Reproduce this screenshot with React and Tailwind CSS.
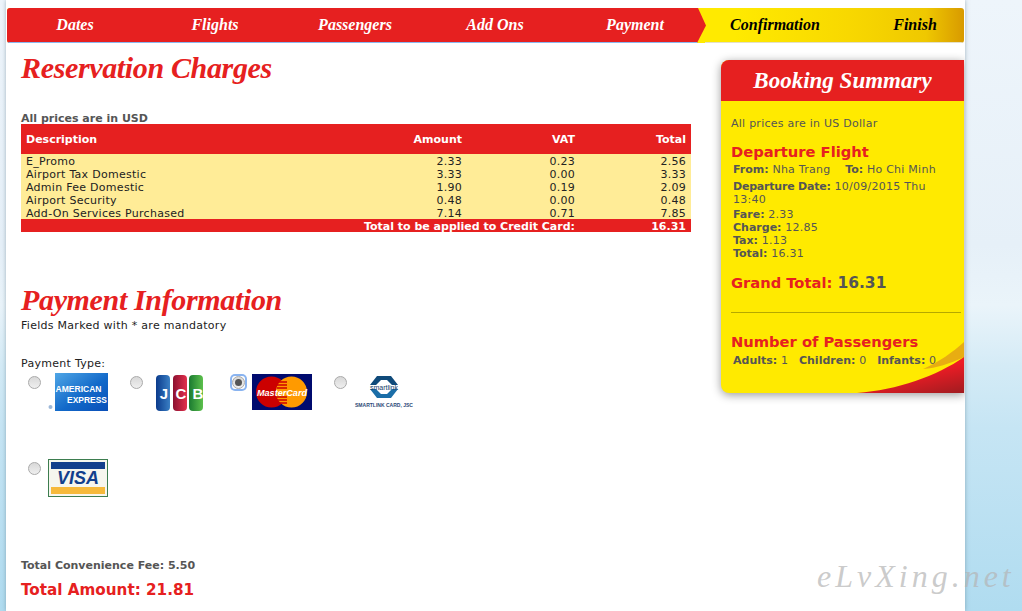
const charges = [
  ['E_Promo', '2.33', '0.23', '2.56'],
  ['Airport Tax Domestic', '3.33', '0.00', '3.33'],
  ['Admin Fee Domestic', '1.90', '0.19', '2.09'],
  ['Airport Security', '0.48', '0.00', '0.48'],
  ['Add-On Services Purchased', '7.14', '0.71', '7.85'],
];

const redSteps = ['Dates', 'Flights', 'Passengers', 'Add Ons', 'Payment'];
const yellowSteps = ['Confirmation', 'Finish'];

const headingFont = "font-['Liberation_Serif',serif] font-bold italic";

function AmexLogo() {
  return (
    <svg width="60" height="38" viewBox="0 0 60 38">
      <defs>
        <linearGradient id="amexBlue" x1="0" y1="0" x2="1" y2="1">
          <stop offset="0" stopColor="#4fa6e6" />
          <stop offset="0.55" stopColor="#1269c9" />
          <stop offset="1" stopColor="#0a4fb8" />
        </linearGradient>
      </defs>
      <circle cx="2.5" cy="34" r="2" fill="#9db8d8" />
      <rect x="7" y="0" width="53" height="38" fill="url(#amexBlue)" />
      <text x="7.5" y="19" fontFamily="Liberation Sans" fontWeight="700" fontSize="8.5" fill="#fff" textLength="46" lengthAdjust="spacingAndGlyphs">AMERICAN</text>
      <text x="19" y="30" fontFamily="Liberation Sans" fontWeight="700" fontSize="8.5" fill="#fff" textLength="40" lengthAdjust="spacingAndGlyphs">EXPRESS</text>
    </svg>
  );
}

function JcbLogo() {
  return (
    <svg width="60" height="38" viewBox="0 0 60 38">
      <defs>
        <linearGradient id="jcbBlue" x1="0" y1="0" x2="1" y2="0">
          <stop offset="0" stopColor="#0b3b8c" />
          <stop offset="1" stopColor="#3a7fc4" />
        </linearGradient>
        <linearGradient id="jcbRed" x1="0" y1="0" x2="1" y2="0">
          <stop offset="0" stopColor="#8c1030" />
          <stop offset="1" stopColor="#e2304c" />
        </linearGradient>
        <linearGradient id="jcbGreen" x1="0" y1="0" x2="1" y2="0">
          <stop offset="0" stopColor="#1a7a30" />
          <stop offset="1" stopColor="#5cc04c" />
        </linearGradient>
      </defs>
      <rect x="6" y="1" width="14" height="36" rx="4" fill="url(#jcbBlue)" />
      <rect x="23" y="1" width="14" height="36" rx="4" fill="url(#jcbRed)" />
      <rect x="39" y="1" width="14" height="36" rx="4" fill="url(#jcbGreen)" />
      <text x="14" y="25" textAnchor="middle" fontFamily="Liberation Sans" fontWeight="700" fontSize="15" fill="#fff">J</text>
      <text x="31" y="25" textAnchor="middle" fontFamily="Liberation Sans" fontWeight="700" fontSize="15" fill="#fff">C</text>
      <text x="48" y="25" textAnchor="middle" fontFamily="Liberation Sans" fontWeight="700" fontSize="15" fill="#fff">B</text>
    </svg>
  );
}

function MasterCardLogo() {
  return (
    <svg width="60" height="36" viewBox="0 0 60 36">
      <rect width="60" height="36" fill="#000a6e" />
      <circle cx="19.5" cy="18" r="15.5" fill="#cc0000" />
      <circle cx="39.5" cy="18" r="15.5" fill="#ff9a00" />
      <path d="M25 8 h10 M25 11 h10 M25 14 h10 M25 23 h10 M25 26 h10 M25 29 h10" stroke="#cc0000" strokeWidth="1.3" />
      <text x="30" y="22" textAnchor="middle" fontFamily="Liberation Sans" fontWeight="700" fontStyle="italic" fontSize="9" fill="#fff" textLength="50" lengthAdjust="spacingAndGlyphs">MasterCard</text>
    </svg>
  );
}

function SmartlinkLogo() {
  return (
    <svg width="60" height="36" viewBox="0 0 60 36">
      <path d="M23 2 L37 2 L44 11 L38 11 L33 6 L27 6 L22 11 L16 11 Z" fill="#0f4a7a" />
      <path d="M16 15 L22 15 L27 20 L33 20 L38 15 L44 15 L37 24 L23 24 Z" fill="#1b6ea8" />
      <text x="30" y="15.5" textAnchor="middle" fontFamily="Liberation Sans" fontSize="7.5" fill="#123a66" textLength="28" lengthAdjust="spacingAndGlyphs">smartlink</text>
      <text x="30" y="33" textAnchor="middle" fontFamily="Liberation Sans" fontWeight="700" fontSize="5" fill="#2c4a78" textLength="58" lengthAdjust="spacingAndGlyphs">SMARTLINK CARD, JSC</text>
    </svg>
  );
}

function VisaLogo() {
  return (
    <svg width="60" height="38" viewBox="0 0 60 38">
      <rect x="0.5" y="0.5" width="59" height="37" fill="#f6f6ee" stroke="#3d7d4f" />
      <rect x="3" y="3" width="54" height="7" fill="#123f8c" />
      <rect x="3" y="28" width="54" height="7" fill="#f6b93b" />
      <text x="30" y="25" textAnchor="middle" fontFamily="Liberation Sans" fontWeight="700" fontStyle="italic" fontSize="18" fill="#123f8c">VISA</text>
    </svg>
  );
}

function PaymentOption({ logo, selected, inset }) {
  return (
    <label className="flex h-[86px] w-[102px] items-start gap-[7px] pl-[7px] tracking-normal">
      <span className={`mt-[3px] flex h-[13px] w-[13px] shrink-0 items-center justify-center rounded-[3px] ${selected ? 'ring-2 ring-[#8ab4f0]' : ''}`}>
        <span className="flex h-[13px] w-[13px] items-center justify-center rounded-full border border-[#aaa] bg-gradient-to-b from-[#d8d8d8] to-[#efefef]">
          {selected && <span className="h-[7px] w-[7px] rounded-full bg-[#555]" />}
        </span>
      </span>
      <span className={inset ? 'mt-px' : ''}>{logo}</span>
    </label>
  );
}

function BookingSummary() {
  return (
    <aside className="relative mt-[17px] h-[333px] w-[243px] shrink-0 rounded-l-lg bg-[#ffea00] shadow-[0_2px_10px_rgba(0,0,0,0.4)]">
      <h2 className={`flex h-[41px] items-center justify-center rounded-tl-lg bg-[#e62020] text-[23px] text-white ${headingFont}`}>
        Booking Summary
      </h2>
      <div className="pl-[10px] text-[11px] leading-[13px] tracking-[0.25px] text-[#555]">
        <p className="mt-[16px]">All prices are in US Dollar</p>
        <h3 className="mt-[13px] text-[14.7px] leading-[18px] font-semibold tracking-normal text-[#e62020]">Departure Flight</h3>
        <div className="pl-[2px]">
          <p className="mt-[2px]">
            <b className="tracking-normal">From:</b> Nha Trang <b className="ml-[11px] tracking-normal">To:</b> Ho Chi Minh
          </p>
          <p className="mt-[4px] w-[200px]">
            <b className="tracking-[-0.2px]">Departure Date:</b> 10/09/2015 Thu 13:40
          </p>
          <p className="mt-[2px]"><b className="tracking-normal">Fare:</b> 2.33</p>
          <p><b className="tracking-normal">Charge:</b> 12.85</p>
          <p><b className="tracking-normal">Tax:</b> 1.13</p>
          <p><b className="tracking-normal">Total:</b> 16.31</p>
        </div>
        <p className="mt-[14px] text-[14.7px] leading-[18px] font-semibold tracking-normal text-[#e62020]">
          Grand Total: <b className="text-[15.5px] text-[#555]">16.31</b>
        </p>
        <hr className="mt-[20px] mr-[3px] border-[#b5a800]" />
        <h3 className="mt-[20px] text-[14.7px] leading-[18px] font-semibold tracking-normal text-[#e62020]">Number of Passengers</h3>
        <p className="mt-[3px] pl-[2px]">
          <b className="tracking-normal">Adults:</b> 1 <b className="ml-[7px] tracking-normal">Children:</b> 0 <b className="ml-[7px] tracking-normal">Infants:</b> 0
        </p>
      </div>
      <svg className="absolute right-0 bottom-0" width="107" height="51" viewBox="0 0 107 51">
        <defs>
          <linearGradient id="swoosh" x1="0.6" y1="0.4" x2="1" y2="1">
            <stop offset="0" stopColor="#ee1c25" />
            <stop offset="1" stopColor="#a01c20" />
          </linearGradient>
        </defs>
        <path d="M66 27 C 82 20 96 10 107 0 L107 15 C 92 22 80 26 66 27 Z" fill="#e8ad12" />
        <path d="M0 51 C 40 48 80 34 107 15 L107 51 Z" fill="url(#swoosh)" />
      </svg>
    </aside>
  );
}

export default function App() {
  return (
    <div className="relative h-[611px] w-[1022px] overflow-hidden bg-[linear-gradient(180deg,#eef5fb_0%,#e6f0f8_40%,#eaf4fa_50%,#d4ebf6_60%,#c6e5f4_70%,#b0dcf0_100%)] pl-[6px] font-['DejaVu_Sans',sans-serif] text-[11px] leading-[13px]">
      <div className="h-full w-[959px] overflow-hidden bg-white pt-[8px] pl-px shadow-[0_0_4px_rgba(80,110,130,0.5)]">
        <nav className="flex h-[35px] w-[957px] overflow-hidden rounded-[3px] bg-[linear-gradient(90deg,#ffea00_0%,#ffea00_76%,#f8d800_88%,#efc800_96%,#d89a00_100%)] text-[16px]">
          <div className="flex w-[699px] shrink-0 items-center border-b border-[#8ab8f0] bg-[#e62020] pb-[2px] text-white [clip-path:polygon(0_0,691px_0,699px_50%,690px_100%,0_100%)]">
            {redSteps.map((step, index) => (
              <span key={step} className={`w-[140px] shrink-0 text-center ${headingFont} ${index === 0 ? '-ml-[2px]' : ''}`}>
                {step}
              </span>
            ))}
          </div>
          <div className="-ml-px flex flex-1 items-center border-b border-[#e4e0c8] pb-[2px] text-black">
            {yellowSteps.map((step) => (
              <span key={step} className={`w-[140px] shrink-0 text-center ${headingFont}`}>{step}</span>
            ))}
          </div>
        </nav>

        <div className="flex">
          <main className="w-[714px] shrink-0 pl-[14px] tracking-[0.28px] text-[#222]">
            <h1 className={`mt-[8px] h-[40px] text-[30px] leading-[34px] tracking-[-0.35px] text-[#e62020] ${headingFont}`}>Reservation Charges</h1>
            <p className="mt-[21px] font-bold tracking-normal text-[#555]">All prices are in USD</p>
            <table className="-mt-px w-[670px] table-fixed border-collapse">
              <thead>
                <tr className="h-[30px] bg-[#e62020] tracking-normal text-white">
                  <th className="w-[331px] pl-[5px] text-left">Description</th>
                  <th className="w-[110px] text-right">Amount</th>
                  <th className="w-[113px] text-right">VAT</th>
                  <th className="pr-[5px] text-right">Total</th>
                </tr>
              </thead>
              <tbody className="bg-[#ffec97] leading-[11px] [&_td]:pt-[2px]">
                {charges.map((row) => (
                  <tr key={row[0]} className="h-[13px]">
                    <td className="pl-[5px]">{row[0]}</td>
                    <td className="text-right">{row[1]}</td>
                    <td className="text-right">{row[2]}</td>
                    <td className="pr-[5px] text-right">{row[3]}</td>
                  </tr>
                ))}
                <tr className="h-[13px] bg-[#e62020] font-bold tracking-normal text-white">
                  <td colSpan={3} className="text-right">Total to be applied to Credit Card:</td>
                  <td className="pr-[5px] text-right">16.31</td>
                </tr>
              </tbody>
            </table>

            <h1 className={`mt-[48px] h-[39px] text-[30px] leading-[39px] tracking-[-0.35px] text-[#e62020] ${headingFont}`}>Payment Information</h1>
            <p>Fields Marked with * are mandatory</p>
            <p className="mt-[25px]">Payment Type:</p>
            <div className="mt-[3px] flex w-[420px] flex-wrap">
              <PaymentOption logo={<AmexLogo />} />
              <PaymentOption logo={<JcbLogo />} inset />
              <PaymentOption logo={<MasterCardLogo />} selected inset />
              <PaymentOption logo={<SmartlinkLogo />} inset />
              <PaymentOption logo={<VisaLogo />} />
            </div>
            <p className="mt-[14px] font-bold tracking-normal text-[#555]">Total Convenience Fee: 5.50</p>
            <p className="mt-[8px] text-[15.2px] leading-[20px] font-bold tracking-normal text-[#e62020]">Total Amount: 21.81</p>
          </main>
          <BookingSummary />
        </div>
      </div>
      <span className="absolute top-[558px] left-[817px] font-['Liberation_Serif',serif] text-[32px] leading-[36px] tracking-[4px] text-[#b4b4b4]/70 italic">
        eLvXing.net
      </span>
    </div>
  );
}
